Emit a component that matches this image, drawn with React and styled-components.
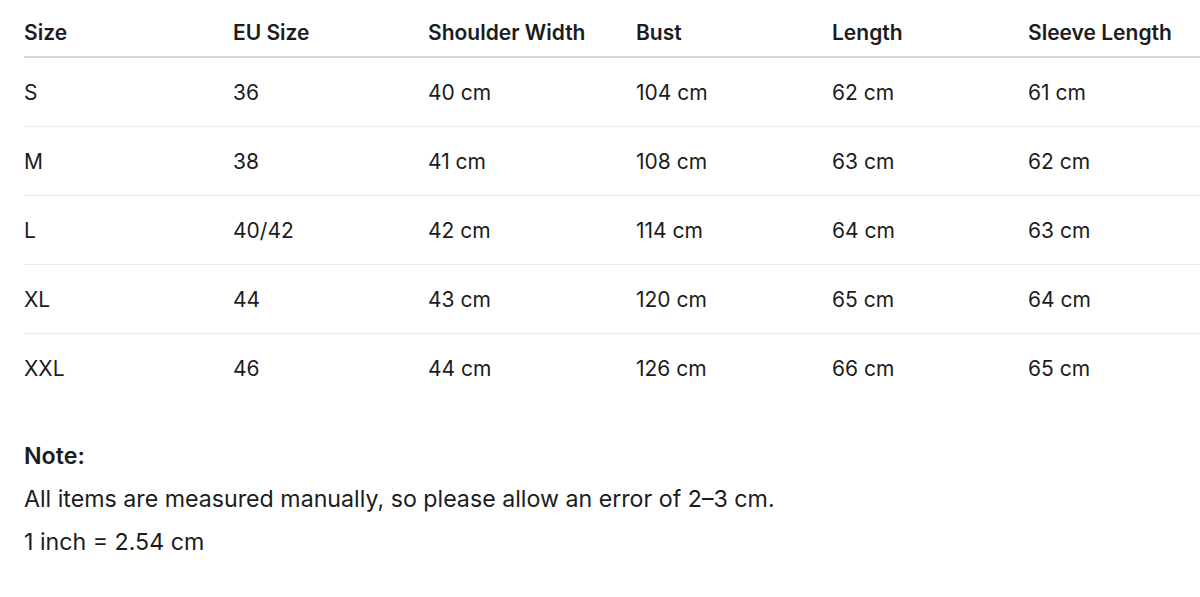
import React from "react";
import styled, { createGlobalStyle } from "styled-components";

const Global = createGlobalStyle`
  html, body { margin: 0; padding: 0; background: #fff; overflow: hidden; }
  body { font-family: Inter, "Noto Sans", sans-serif; color: #1c1c1e; }
`;

const Page = styled.div`
  width: 1200px;
  height: 597px;
  overflow: hidden;
  padding-left: 24px;
  box-sizing: border-box;
`;

const COLS = "209px 195px 208px 196px 196px 196px";

const Table = styled.div`
  width: 1200px;
`;

const Row = styled.div`
  display: grid;
  grid-template-columns: ${COLS};
  align-items: center;
  box-sizing: border-box;
  height: ${(p) => (p.$head ? "58px" : "69px")};
  padding-top: ${(p) => (p.$head ? "8px" : "0")};
  border-bottom: ${(p) =>
    p.$head ? "2px solid #d6d6d6" : p.$last ? "1px solid transparent" : "1px solid #ececec"};
`;

const HeadCell = styled.div`
  font-size: 21px;
  font-weight: 600;
  color: #1c1c1e;
  white-space: nowrap;
`;

const Cell = styled.div`
  font-size: 21px;
  font-weight: 400;
  color: #1c1c1e;
  white-space: nowrap;
`;

const Notes = styled.div`
  margin-top: 32px;
  display: flex;
  flex-direction: column;
`;

const NoteTitle = styled.div`
  font-size: 23.2px;
  font-weight: 600;
  line-height: 43px;
`;

const NoteLine = styled.div`
  font-size: 23.2px;
  line-height: 43px;
`;

const headers = ["Size", "EU Size", "Shoulder Width", "Bust", "Length", "Sleeve Length"];
const rows = [
  ["S", "36", "40 cm", "104 cm", "62 cm", "61 cm"],
  ["M", "38", "41 cm", "108 cm", "63 cm", "62 cm"],
  ["L", "40/42", "42 cm", "114 cm", "64 cm", "63 cm"],
  ["XL", "44", "43 cm", "120 cm", "65 cm", "64 cm"],
  ["XXL", "46", "44 cm", "126 cm", "66 cm", "65 cm"],
];

export default function App() {
  return (
    <Page>
      <Global />
      <Table>
        <Row $head>
          {headers.map((h) => (
            <HeadCell key={h}>{h}</HeadCell>
          ))}
        </Row>
        {rows.map((r, i) => (
          <Row key={r[0]} $last={i === rows.length - 1}>
            {r.map((c, j) => (
              <Cell key={j}>{c}</Cell>
            ))}
          </Row>
        ))}
      </Table>
      <Notes>
        <NoteTitle>Note:</NoteTitle>
        <NoteLine>All items are measured manually, so please allow an error of 2–3 cm.</NoteLine>
        <NoteLine>1 inch = 2.54 cm</NoteLine>
      </Notes>
    </Page>
  );
}
